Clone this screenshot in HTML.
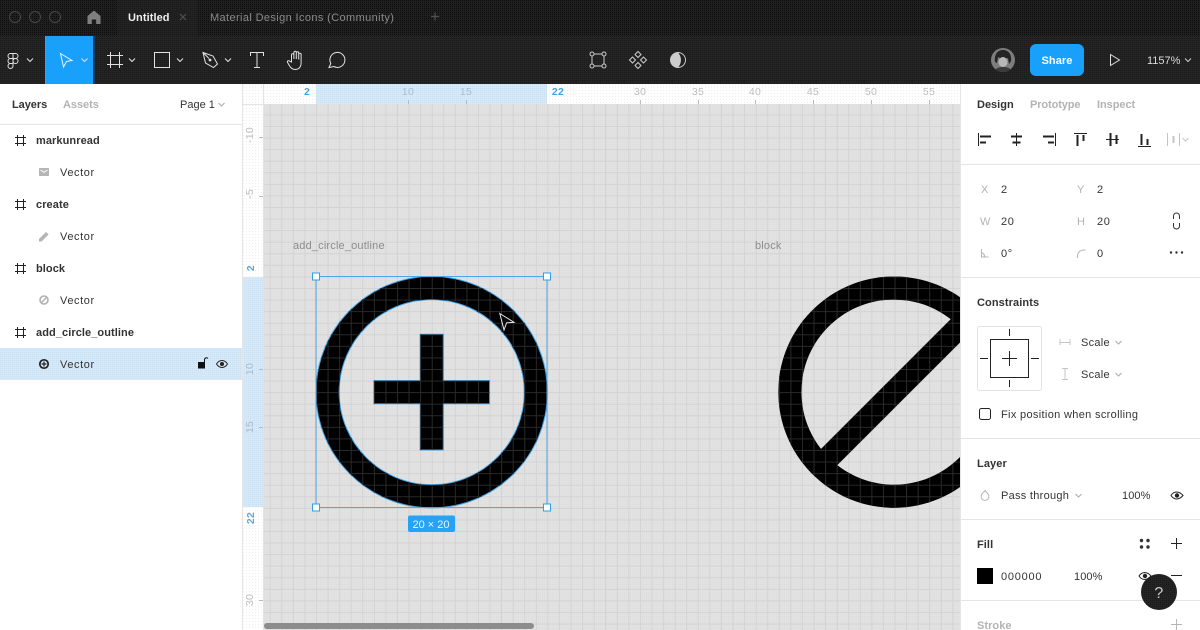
<!DOCTYPE html>
<html><head><meta charset="utf-8"><title>Figma</title>
<style>
html,body{margin:0;padding:0;width:1200px;height:630px;overflow:hidden;background:#fff}
svg{display:block}
text{font-family:"Liberation Sans",sans-serif;font-size:11px;letter-spacing:.28px;fill:#333}
.b{font-weight:bold;fill:#333;letter-spacing:.08px}
.m{fill:#b3b3b3;letter-spacing:.05px}
.r{font-size:10.5px;fill:#bdbdbd;text-anchor:middle}
.rb{font-size:10.5px;font-weight:bold;fill:#3ea6ec;text-anchor:middle}
.w{fill:none;stroke:#e2e2e2;stroke-width:1}
</style></head><body>
<svg width="1200" height="630" viewBox="0 0 1200 630" xmlns="http://www.w3.org/2000/svg">
<defs>
<pattern id="dk" width="2" height="2" patternUnits="userSpaceOnUse"><rect width="2" height="2" fill="#202020"/><rect width="1" height="1" fill="#0c0c0c"/></pattern>
<pattern id="dk2" width="2" height="2" patternUnits="userSpaceOnUse"><rect width="2" height="2" fill="#222"/><rect width="1" height="1" fill="#1a1a1a"/></pattern>
<pattern id="dk3" width="2" height="2" patternUnits="userSpaceOnUse"><rect width="2" height="2" fill="#242424"/><rect width="1" height="1" fill="#1a1a1a"/></pattern>
<pattern id="dc" width="2" height="2" patternUnits="userSpaceOnUse"><rect width="2" height="2" fill="#e2e2e2"/><rect width="1" height="1" fill="#dddddd"/></pattern>
<pattern id="dw" width="3" height="3" patternUnits="userSpaceOnUse"><rect width="3" height="3" fill="#fff"/><rect width="1" height="1" fill="#efefef"/></pattern>
<pattern id="db" width="2" height="2" patternUnits="userSpaceOnUse"><rect width="2" height="2" fill="#d7e9f7"/><rect width="1" height="1" fill="#c8e0f3"/></pattern>
<pattern id="grid" x="292.86" y="253.3" width="11.57" height="11.57" patternUnits="userSpaceOnUse"><path d="M.5 0V11.57M0 .5H11.57" stroke="#d3d3d3" stroke-width="1" fill="none"/></pattern>
<pattern id="gridL" x="292.86" y="253.3" width="11.57" height="11.57" patternUnits="userSpaceOnUse"><path d="M.5 0V11.57M0 .5H11.57" stroke="#2a2a2a" stroke-width="1" fill="none"/></pattern>
<clipPath id="c1"><path transform="translate(292.86,253.3) scale(11.57)" d="M13 7h-2v4H7v2h4v4h2v-4h4v-2h-4V7zm-1-5C6.48 2 2 6.48 2 12s4.48 10 10 10 10-4.48 10-10S17.52 2 12 2zm0 18c-4.41 0-8-3.59-8-8s3.59-8 8-8 8 3.59 8 8-3.59 8-8 8z"/></clipPath>
<clipPath id="c2"><path transform="translate(755.2,253.3) scale(11.57)" d="M12 2C6.48 2 2 6.48 2 12s4.48 10 10 10 10-4.48 10-10S17.52 2 12 2zM4 12c0-4.42 3.58-8 8-8 1.85 0 3.55.63 4.9 1.69L5.69 16.9C4.63 15.55 4 13.85 4 12zm8 8c-1.85 0-3.55-.63-4.9-1.69L18.31 7.1C19.37 8.45 20 10.15 20 12c0 4.42-3.58 8-8 8z"/></clipPath>
<clipPath id="av"><circle cx="1003" cy="60" r="12"/></clipPath>
</defs>

<!-- canvas -->
<rect x="243" y="104" width="718" height="526" fill="url(#dc)"/>
<rect x="264" y="104" width="697" height="526" fill="url(#grid)"/>
<text x="293" y="249" style="fill:#8c8c8c;letter-spacing:.17px">add_circle_outline</text>
<text x="755" y="249" style="fill:#8c8c8c;letter-spacing:.17px">block</text>

<path transform="translate(755.2,253.3) scale(11.57)" d="M12 2C6.48 2 2 6.48 2 12s4.48 10 10 10 10-4.48 10-10S17.52 2 12 2zM4 12c0-4.42 3.58-8 8-8 1.85 0 3.55.63 4.9 1.69L5.69 16.9C4.63 15.55 4 13.85 4 12zm8 8c-1.85 0-3.55-.63-4.9-1.69L18.31 7.1C19.37 8.45 20 10.15 20 12c0 4.42-3.58 8-8 8z" fill="#000"/>
<path transform="translate(292.86,253.3) scale(11.57)" d="M13 7h-2v4H7v2h4v4h2v-4h4v-2h-4V7zm-1-5C6.48 2 2 6.48 2 12s4.48 10 10 10 10-4.48 10-10S17.52 2 12 2zm0 18c-4.41 0-8-3.59-8-8s3.59-8 8-8 8 3.59 8 8-3.59 8-8 8z" fill="#000" stroke="#3aa6ee" stroke-width="1" vector-effect="non-scaling-stroke"/>
<rect x="264" y="104" width="697" height="526" fill="url(#gridL)" clip-path="url(#c1)"/>
<rect x="264" y="104" width="697" height="526" fill="url(#gridL)" clip-path="url(#c2)"/>

<!-- selection -->
<rect x="316" y="276.5" width="231" height="231" fill="none" stroke="#4ea7e6" stroke-width="1"/>
<g fill="#fff" stroke="#2f9fe8" stroke-width="1">
<rect x="312.5" y="273" width="7" height="7"/><rect x="543.5" y="273" width="7" height="7"/>
<rect x="312.5" y="504" width="7" height="7"/><rect x="543.5" y="504" width="7" height="7"/>
</g>
<rect x="408" y="515.5" width="47" height="16.5" rx="2" fill="#27a3f6"/>
<text x="431" y="528" text-anchor="middle" style="fill:#e8f5ff;letter-spacing:0">20 × 20</text>

<!-- canvas cursor -->
<path d="M499.8 313.5L514 322.3 506.6 322.8 504 330Z" fill="#0a0a0a" stroke="#e8e8e8" stroke-width="1"/>

<!-- scrollbar -->
<rect x="264" y="623" width="270" height="6" rx="3" fill="#8c8c8c"/>

<!-- rulers -->
<rect x="243" y="84" width="718" height="20" fill="url(#dw)"/>
<rect x="243" y="104" width="21" height="526" fill="url(#dw)"/>
<rect x="316" y="84" width="231" height="20" fill="url(#db)"/>
<rect x="243" y="277" width="21" height="230" fill="url(#db)"/>
<path d="M263.5 84V630M243 104.5H264" stroke="#e3e3e3" stroke-width="1"/>
<g stroke="#bbb" stroke-width="1">
<path d="M408.5 100v4M466.5 100v4M640.5 100v4M698.5 100v4M755.5 100v4M813.5 100v4M871.5 100v4M929.5 100v4"/>
<path d="M259 137.5h4M259 196.5h4M259 369.5h4M259 427.5h4M259 600.5h4"/>
</g>
<text x="307" y="95" class="rb">2</text>
<text x="408" y="95" class="r" style="fill:#a8bccb">10</text>
<text x="466" y="95" class="r" style="fill:#a8bccb">15</text>
<text x="558" y="95" class="rb">22</text>
<text x="640" y="95" class="r">30</text><text x="698" y="95" class="r">35</text><text x="755" y="95" class="r">40</text>
<text x="813" y="95" class="r">45</text><text x="871" y="95" class="r">50</text><text x="929" y="95" class="r">55</text>
<g>
<text transform="translate(253,135) rotate(-90)" class="r">-10</text>
<text transform="translate(253,194) rotate(-90)" class="r">-5</text>
<text transform="translate(254,268) rotate(-90)" class="rb" style="fill:#5aa9dd">2</text>
<text transform="translate(253,369) rotate(-90)" class="r" style="fill:#a8bccb">10</text>
<text transform="translate(253,427) rotate(-90)" class="r" style="fill:#a8bccb">15</text>
<text transform="translate(254,518) rotate(-90)" class="rb" style="fill:#5aa9dd">22</text>
<text transform="translate(253,600) rotate(-90)" class="r">30</text>
</g>

<!-- left panel -->
<rect x="0" y="84" width="242" height="546" fill="#fff"/>
<rect x="242" y="84" width="1" height="546" fill="#e5e5e5"/>
<rect x="0" y="124" width="242" height="1" fill="#e5e5e5"/>
<text x="12" y="108" class="b" style="letter-spacing:-.05px">Layers</text>
<text x="63" y="108" class="m" style="font-weight:bold;letter-spacing:-.05px">Assets</text>
<text x="180" y="108" style="letter-spacing:0">Page 1</text>
<path d="M218.5 103l3 3 3-3" fill="none" stroke="#aaa"/>

<rect x="0" y="348" width="242" height="32" fill="url(#db)"/>
<g stroke="#222" stroke-width="1" fill="none">
<path d="M17.5 135v11M23.5 135v11M15 137.5h11M15 143.5h11"/>
<path d="M17.5 199v11M23.5 199v11M15 201.5h11M15 207.5h11"/>
<path d="M17.5 263v11M23.5 263v11M15 265.5h11M15 271.5h11"/>
<path d="M17.5 327v11M23.5 327v11M15 329.5h11M15 335.5h11"/>
</g>
<text x="36" y="144" class="b">markunread</text>
<text x="36" y="208" class="b">create</text>
<text x="36" y="272" class="b">block</text>
<text x="36" y="336" class="b">add_circle_outline</text>
<g style="letter-spacing:.6px"><text x="60" y="176" style="letter-spacing:.6px">Vector</text><text x="60" y="240" style="letter-spacing:.6px">Vector</text><text x="60" y="304" style="letter-spacing:.6px">Vector</text><text x="60" y="368" style="letter-spacing:.6px">Vector</text></g>
<!-- layer icons -->
<rect x="39" y="168" width="10" height="8" rx=".8" fill="#b5b5b5"/><path d="M40.5 170l3.5 2.3 3.5-2.3" fill="none" stroke="#fff" stroke-width="1"/>
<path d="M39 241.5v-2.6l7-7 2.6 2.6-7 7z" fill="#b5b5b5"/>
<circle cx="44" cy="300" r="4" fill="none" stroke="#b0b0b0" stroke-width="1.6"/><path d="M41.5 302.5l5-5" stroke="#b0b0b0" stroke-width="1.4"/>
<circle cx="44" cy="364" r="4.2" fill="none" stroke="#222" stroke-width="1.7"/><path d="M44 361.5v5M41.5 364h5" stroke="#222" stroke-width="1.2"/>
<rect x="198" y="362" width="7" height="6.5" fill="#111"/><path d="M204.5 362v-2.5a2 2 0 0 1 3.5-1" fill="none" stroke="#111" stroke-width="1"/>
<path d="M216.5 364c3-4.6 8-4.6 11 0-3 4.6-8 4.6-11 0z" fill="none" stroke="#222"/><circle cx="222" cy="364" r="2" fill="#222"/>

<!-- right panel -->
<rect x="961" y="84" width="239" height="546" fill="#fff"/>
<rect x="960" y="84" width="1" height="546" fill="#e5e5e5"/>
<rect x="961" y="164" width="239" height="1" fill="#e5e5e5"/>
<rect x="961" y="277" width="239" height="1" fill="#e5e5e5"/>
<rect x="961" y="438" width="239" height="1" fill="#e5e5e5"/>
<rect x="961" y="519" width="239" height="1" fill="#e5e5e5"/>
<rect x="961" y="600" width="239" height="1" fill="#e5e5e5"/>
<text x="977" y="108" class="b" style="letter-spacing:0">Design</text>
<text x="1030" y="108" class="m" style="font-weight:bold;letter-spacing:-.1px">Prototype</text>
<text x="1097" y="108" class="m" style="font-weight:bold;letter-spacing:-.05px">Inspect</text>

<!-- align icons -->
<g fill="none" stroke="#222" stroke-width="1">
<path d="M978.5 133v13"/><path d="M980 136.5h11M980 142.5h6" stroke-width="2"/>
<path d="M1016.5 133v13"/><path d="M1011 136.5h11M1012.5 142.5h8" stroke-width="2"/>
<path d="M1055.5 133v13"/><path d="M1043 136.5h11M1048 142.5h6" stroke-width="2"/>
<path d="M1074 133.5h13"/><path d="M1077.5 135v11M1083.5 135v6" stroke-width="2"/>
<path d="M1106 139.5h13"/><path d="M1110.5 133v13M1116.5 135v9" stroke-width="2"/>
<path d="M1138 146.5h13"/><path d="M1141.5 134v11M1147.5 139v6" stroke-width="2"/>
</g>
<g fill="none" stroke="#c4c4c4" stroke-width="1">
<path d="M1167.5 133v13M1179.5 133v13"/><path d="M1173.5 136v7" stroke-width="2"/>
<path d="M1182.5 138l3 3 3-3"/>
</g>

<!-- props -->
<text x="981" y="193" class="m">X</text><text x="1001" y="193">2</text>
<text x="1077" y="193" class="m">Y</text><text x="1097" y="193">2</text>
<text x="980" y="225" class="m">W</text><text x="1001" y="225" style="letter-spacing:.6px">20</text>
<text x="1077" y="225" class="m">H</text><text x="1097" y="225" style="letter-spacing:.6px">20</text>
<path d="M981.5 249v8h7M981.5 253c2 0 3 1 3 4" fill="none" stroke="#b5b5b5"/>
<text x="1001" y="257" style="letter-spacing:.6px">0°</text>
<path d="M1077.5 258v-2a6 6 0 0 1 6-6h2" fill="none" stroke="#b5b5b5"/>
<text x="1097" y="257">0</text>
<path d="M1173.5 219v-3a3 3 0 0 1 6 0v3M1173.5 223v3a3 3 0 0 0 6 0v-3" fill="none" stroke="#333"/>
<g fill="#333"><circle cx="1171" cy="252.5" r="1.2"/><circle cx="1176.5" cy="252.5" r="1.2"/><circle cx="1182" cy="252.5" r="1.2"/></g>

<text x="977" y="306" class="b" style="letter-spacing:.1px">Constraints</text>
<rect x="977.5" y="326.5" width="64" height="64" rx="2" fill="#fff" stroke="#e3e3e3"/>
<rect x="990.5" y="339.5" width="38" height="38" fill="none" stroke="#222"/>
<path d="M1002 358.5h15M1009.5 351v15M1009.5 329v7M1009.5 380v7M980 358.5h8M1031 358.5h8" fill="none" stroke="#222"/>
<path d="M1060 339v6M1070 339v6M1060 342.5h10" fill="none" stroke="#c4c4c4"/>
<path d="M1062 368.5h6M1062 379.5h6M1065 368v12" fill="none" stroke="#c4c4c4"/>
<text x="1081" y="346">Scale</text><text x="1081" y="378">Scale</text>
<path d="M1115.5 341l3 3 3-3M1115.5 373l3 3 3-3" fill="none" stroke="#aaa"/>
<rect x="979.5" y="408.5" width="11" height="11" rx="2" fill="#fff" stroke="#222"/>
<text x="1001" y="418" style="letter-spacing:.33px">Fix position when scrolling</text>

<text x="977" y="467" class="b" style="letter-spacing:.1px">Layer</text>
<path d="M985 490.5l3 3.5a3.9 3.9 0 1 1-6 0z" fill="none" stroke="#b5b5b5"/>
<text x="1001" y="499">Pass through</text>
<path d="M1075.5 494l3 3 3-3" fill="none" stroke="#aaa"/>
<text x="1122" y="499" style="letter-spacing:.1px">100%</text>
<path d="M1171 495.5c3-4.6 8-4.6 12 0-4 4.6-9 4.6-12 0z" fill="none" stroke="#222"/><circle cx="1177" cy="495.5" r="2.2" fill="#222"/>

<text x="977" y="548" class="b">Fill</text>
<g fill="#333"><circle cx="1141.5" cy="540.5" r="1.7"/><circle cx="1148" cy="540.5" r="1.7"/><circle cx="1141.5" cy="547" r="1.7"/><circle cx="1148" cy="547" r="1.7"/></g>
<path d="M1171 543.5h11M1176.5 538v11" stroke="#222" fill="none"/>
<rect x="977" y="568" width="16" height="16" fill="#000"/>
<text x="1001" y="580" style="letter-spacing:.75px">000000</text>
<text x="1074" y="580" style="letter-spacing:.1px">100%</text>
<path d="M1139 576c3-4.6 8-4.6 12 0-4 4.6-9 4.6-12 0z" fill="none" stroke="#222"/><circle cx="1145" cy="576" r="2.2" fill="#222"/>
<path d="M1171 575.5h11" stroke="#222"/>
<text x="977" y="629" class="m" style="font-weight:bold">Stroke</text>
<path d="M1171 624.5h11M1176.5 619v11" stroke="#b5b5b5" fill="none"/>
<circle cx="1159" cy="592" r="18" fill="url(#dk3)"/>
<text x="1159" y="598" text-anchor="middle" style="font-size:16px;fill:#ccc">?</text>

<!-- top tab bar -->
<rect x="0" y="0" width="1200" height="36" fill="url(#dk)"/>
<rect x="117" y="0" width="80" height="36" fill="url(#dk2)"/>
<g fill="none" stroke="#474747" stroke-width="1"><circle cx="15" cy="17" r="5.5"/><circle cx="35" cy="17" r="5.5"/><circle cx="55" cy="17" r="5.5"/></g>
<path d="M94 10.5l6.500 5.500v8h-4.300v-4.500h-4.400V24h-4.300v-8z" fill="#7f7f7f"/>
<text x="128" y="21" style="fill:#eee;font-weight:bold;letter-spacing:.08px">Untitled</text>
<path d="M180 14l6 6M186 14l-6 6" stroke="#505050" stroke-width="1.2"/>
<text x="210" y="21" style="fill:#8a8a8a;letter-spacing:.38px">Material Design Icons (Community)</text>
<path d="M435 12.5v8M431 16.5h8" stroke="#505050" stroke-width="1.2"/>

<!-- toolbar -->
<rect x="0" y="36" width="1200" height="48" fill="url(#dk3)"/>
<rect x="45" y="36" width="48" height="48" fill="#18a0fb"/>
<rect x="45" y="36" width="1" height="48" fill="#8c8c8c"/>
<rect x="93" y="36" width="2" height="48" fill="#0d3c66"/>
<!-- figma logo -->
<g fill="none" stroke="#e2e2e2" stroke-width="1">
<path d="M13 53.5H10.500a2.500 2.500 0 0 0 0 5H13zM13 53.500h2.500a2.500 2.500 0 0 1 0 5H13zM13 58.500H10.500a2.500 2.500 0 0 0 0 5H13zM10.500 63.500a2.500 2.500 0 1 0 2.500 2.500v-2.500z"/><circle cx="15.500" cy="61" r="2.500"/>
</g>
<path d="M27 58.500l3 3 3-3" class="w"/>
<path d="M60.500 53.500L72 60.500 66.500 61.500 63.500 67z" fill="none" stroke="#e8f4ff" stroke-width="1"/>
<path d="M81.500 58.500l3 3 3-3" class="w"/>
<path d="M110.500 52v16M119.500 52v16M107 55.500h16M107 64.500h16" class="w"/>
<path d="M129 58.500l3 3 3-3" class="w"/>
<rect x="154.500" y="52.500" width="15" height="15" class="w"/>
<path d="M177 58.500l3 3 3-3" class="w"/>
<path d="M203 52.500l10 3.500 4.500 8-4 3.500-8-4.500zM203 52.500l6 6" class="w"/><circle cx="210" cy="60" r="1.400" fill="#e2e2e2"/>
<path d="M225 58.500l3 3 3-3" class="w"/>
<path d="M250.500 56v-3.500h13V56M257 52.500v15M254 67.500h6" class="w"/>
<path d="M291.500 62v-7a1.200 1.200 0 0 1 2.400 0v4-6.500a1.200 1.200 0 0 1 2.400 0V59v-6a1.200 1.200 0 0 1 2.400 0v6.500-5a1.200 1.200 0 0 1 2.400 0V63c0 4-2.400 6.500-6 6.500-3 0-4.300-1.500-5.500-3.500l-2-3.500c-.8-1.500 1-2.500 2-1.300z" class="w"/>
<path d="M329 67.500l1.800-4a7.500 7.500 0 1 1 3 3z" class="w"/>
<!-- center -->
<g fill="none" stroke="#ccc" stroke-width="1">
<path d="M592 54h12M592 66h12M592 54v12M604 54v12"/>
<g fill="#222"><circle cx="592" cy="54" r="2"/><circle cx="604" cy="54" r="2"/><circle cx="592" cy="66" r="2"/><circle cx="604" cy="66" r="2"/></g>
<path d="M638 51.500l3 3-3 3-3-3zM638 62.500l3 3-3 3-3-3zM632.500 57l3 3-3 3-3-3zM643.500 57l3 3-3 3-3-3z"/>
<circle cx="678" cy="60" r="7.500"/>
</g>
<path d="M678 52.500a7.500 7.500 0 0 0 0 15 11 11 0 0 0 0-15z" fill="#ccc"/>
<!-- right -->
<circle cx="1003" cy="60" r="12" fill="#7d7d7d"/>
<g clip-path="url(#av)"><path d="M995 62c-1-8 3-12 8-12s9 4 8 11l-2 3-1-6c-3 1-7 1-10-1l-1 6z" fill="#242424"/><ellipse cx="1003" cy="62" rx="4.500" ry="5" fill="#b8b8b8"/><path d="M992 73c3-5 7-6 11-6s8 1 11 6z" fill="#3a3a3a"/></g>
<rect x="1030" y="44" width="54" height="32" rx="6" fill="#18a0fb"/>
<text x="1057" y="64" text-anchor="middle" style="fill:#fff;font-weight:bold;letter-spacing:.1px">Share</text>
<path d="M1110.500 54.500L1119.500 60 1110.500 65.500z" fill="none" stroke="#ddd" stroke-width="1"/>
<text x="1147" y="64" style="fill:#ddd;letter-spacing:0">1157%</text>
<path d="M1185 58.500l3 3 3-3" fill="none" stroke="#ccc"/>
</svg>
</body></html>
